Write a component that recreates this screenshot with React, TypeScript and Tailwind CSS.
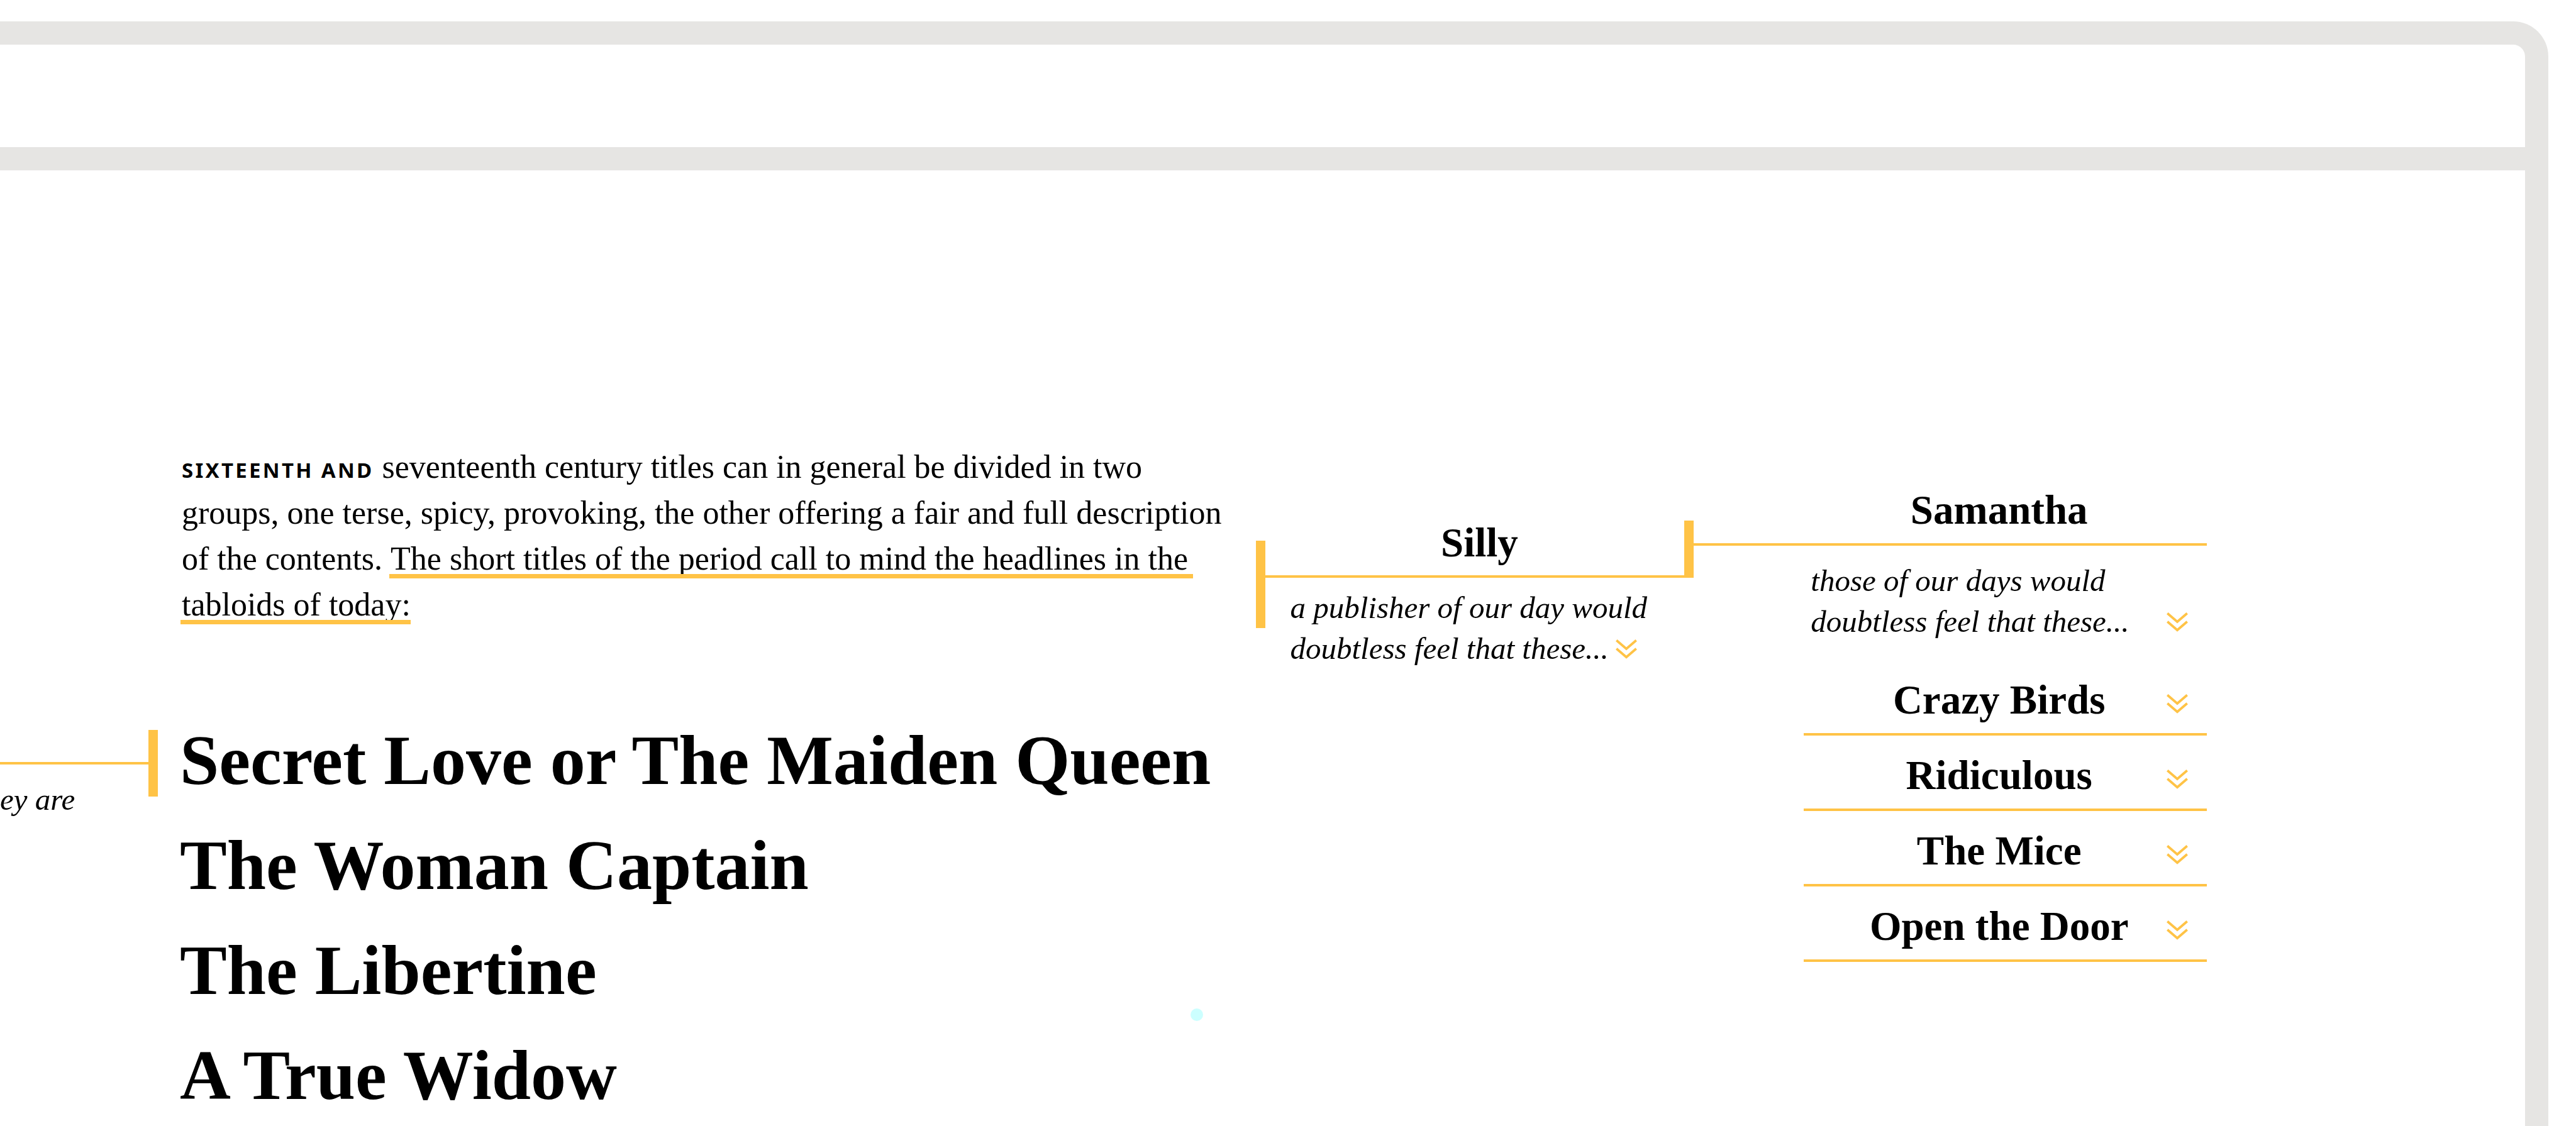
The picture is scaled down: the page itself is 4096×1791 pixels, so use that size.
type ChevronsProps = { label: string; className?: string };

const headlines = [
  { text: 'Secret Love or The Maiden Queen' },
  { text: 'The Woman Captain' },
  { text: 'The Libertine', marked: true },
  { text: 'A True Widow' },
];

const readers = ['Crazy Birds', 'Ridiculous', 'The Mice', 'Open the Door'];

const underlined =
  "relative inline-block after:absolute after:-left-0.5 after:h-[7px] after:bottom-[5px] after:bg-[#ffc346] after:content-['']";

function Chevrons({ label, className = '' }: ChevronsProps) {
  return (
    <button type="button" aria-label={label} className={`inline-flex shrink-0 cursor-pointer text-[#ffc346] ${className}`}>
      <svg viewBox="0 0 34 31" className="h-[31px] w-[34px]" fill="none" stroke="currentColor" strokeWidth="3.8">
        <path d="M1.3 1.5 17 15 32.7 1.5" />
        <path d="M1.3 14.7 17 28.2 32.7 14.7" />
      </svg>
    </button>
  );
}

function Bar({ className }: { className: string }) {
  return <div className={`w-[15px] shrink-0 bg-[#ffc346] ${className}`} />;
}

function LeftNote() {
  return (
    <aside className="mt-[890px] flex items-start">
      <div className="mt-[51px] min-w-0 flex-1 border-t-4 border-[#ffc346]">
        <p className="pt-[23px] text-[49px] leading-[65px] italic">ey are</p>
      </div>
      <Bar className="h-[106px]" />
    </aside>
  );
}

function Article() {
  return (
    <article className="mt-[435px] min-w-0 pl-[35px] whitespace-nowrap">
      <p className="pl-[3px] text-[52px] leading-[73px]">
        <strong className="font-['Noto_Sans',sans-serif] text-[33px] leading-none font-bold tracking-widest">
          SIXTEENTH AND
        </strong>{' '}
        seventeenth century titles can in general be divided in two
        <br />
        groups, one terse, spicy, provoking, the other offering a fair and full description
        <br />
        of the contents.{' '}
        <span className={`${underlined} after:-right-2`}>
          The short titles of the period call to mind the headlines in the
        </span>
        <br />
        <span className={`${underlined} after:right-0`}>tabloids of today:</span>
      </p>
      <div className="mt-32">
        {headlines.map((h) => (
          <div key={h.text} className="flex items-end justify-between">
            <h2 className="text-[112px] leading-[167px] font-bold">{h.text}</h2>
            {h.marked && <span className="mr-[84px] mb-[3px] size-5 rounded-full bg-[#ccffff]" />}
          </div>
        ))}
      </div>
    </article>
  );
}

function SillyNote() {
  return (
    <section className="mt-[556px] flex items-start">
      <Bar className="mt-[33px] h-[139px]" />
      <div className="min-w-0 flex-1">
        <h3 className="border-b-4 border-[#ffc346] pb-4 pl-[15px] text-center text-[65px] leading-[72px] font-bold">
          Silly
        </h3>
        <p className="pt-[15px] pl-10 text-[49px] leading-[65px] whitespace-nowrap italic">
          a publisher of our day would
          <br />
          doubtless feel that these...
          <Chevrons label="Read more from Silly" className="ml-[11px] align-baseline" />
        </p>
      </div>
    </section>
  );
}

function SamanthaNotes() {
  return (
    <section className="mt-[504px] flex items-start">
      <Bar className="mt-[53px] h-[91px]" />
      <div className="min-w-0 flex-1">
        <h3 className="border-b-4 border-[#ffc346] pr-5 pb-[17px] pl-[175px] text-center text-[65px] leading-[72px] font-bold">
          Samantha
        </h3>
        <div className="pl-[175px]">
          <div className="mt-[23px] flex items-end justify-between pr-[30px] pl-[11px]">
            <p className="text-[49px] leading-[65px] whitespace-nowrap italic">
              those of our days would
              <br />
              doubtless feel that these...
            </p>
            <Chevrons label="Read more from Samantha" className="mb-4" />
          </div>
          <ul className="mt-14 flex flex-col gap-[27px]">
            {readers.map((name) => (
              <li key={name} className="flex items-baseline border-b-4 border-[#ffc346] pr-[30px] pb-[17px]">
                <h3 className="flex-1 pl-11 text-center text-[65px] leading-[72px] font-bold">{name}</h3>
                <Chevrons label={`Read more from ${name}`} />
              </li>
            ))}
          </ul>
        </div>
      </div>
    </section>
  );
}

export default function App() {
  return (
    <div className="flex h-screen flex-col overflow-hidden bg-white pt-[34px] pr-11 font-['Liberation_Serif',serif] text-black">
      <div className="flex min-h-0 flex-1 flex-col rounded-tr-[56px] border-t-37 border-r-37 border-[#e6e5e3]">
        <header className="h-[200px] shrink-0 border-b-37 border-[#e6e5e3]" />
        <main className="grid grid-cols-[251fr_1746fr_682fr_831fr_506fr] items-start">
          <LeftNote />
          <Article />
          <SillyNote />
          <SamanthaNotes />
        </main>
      </div>
    </div>
  );
}
